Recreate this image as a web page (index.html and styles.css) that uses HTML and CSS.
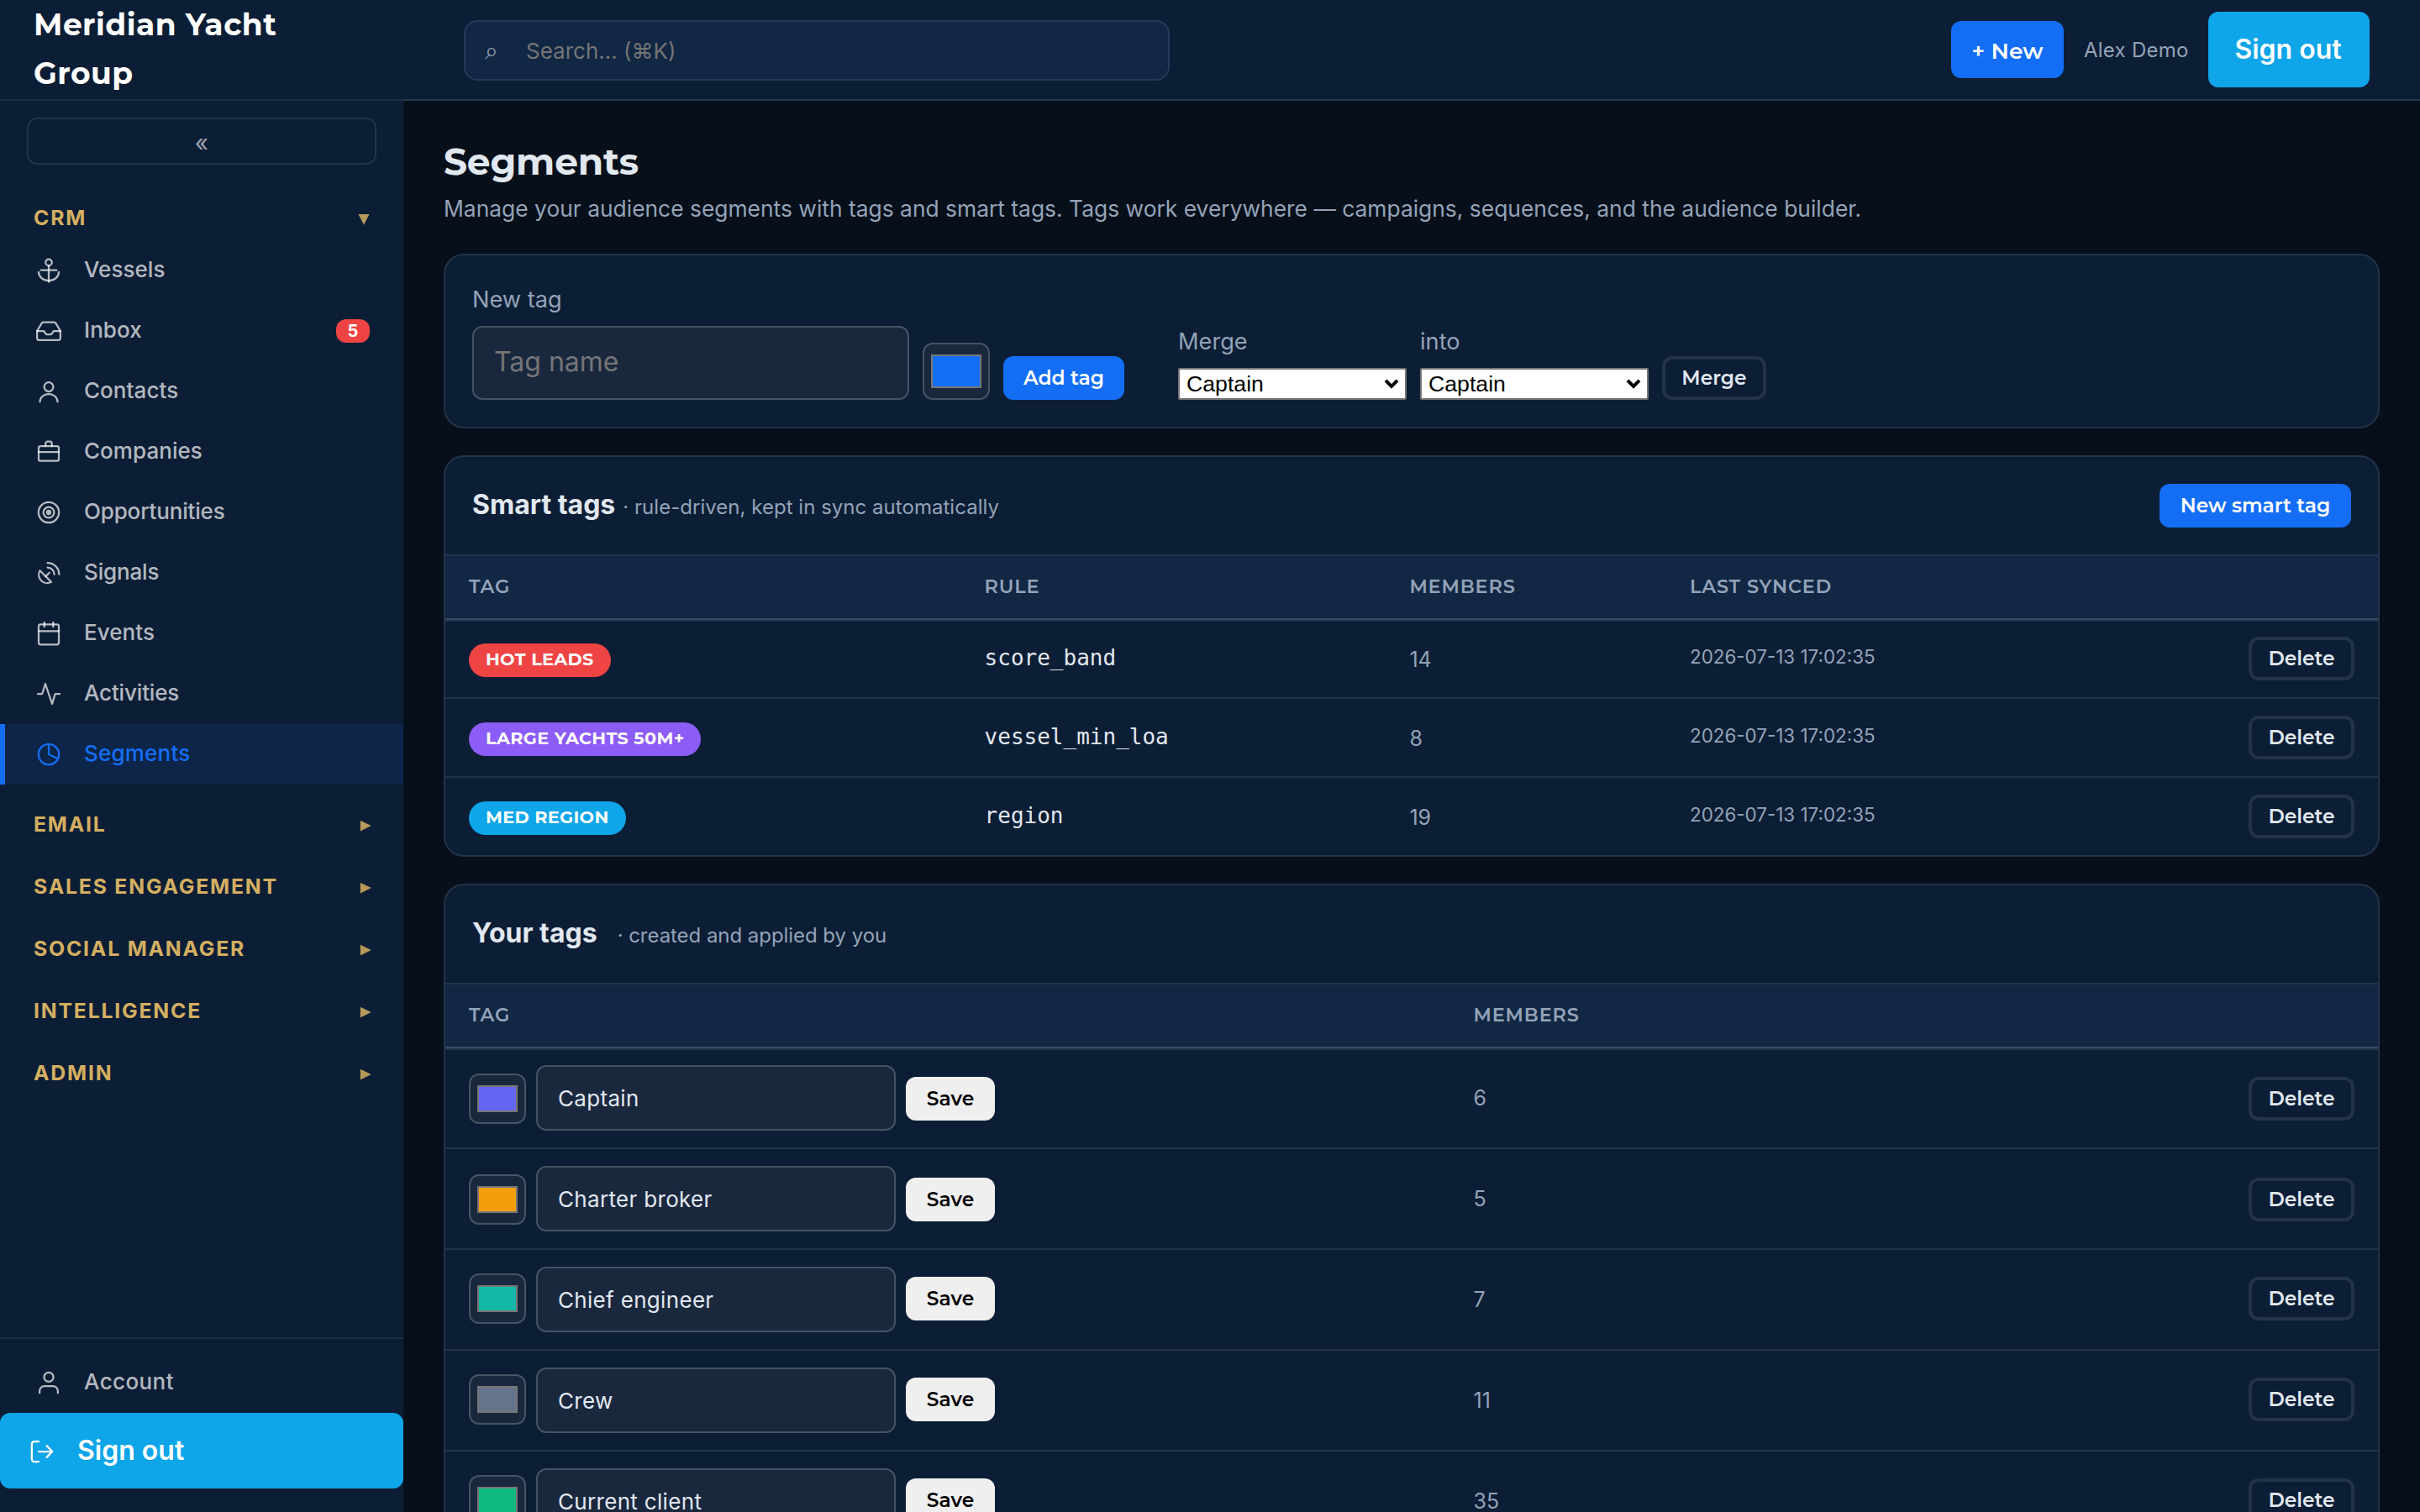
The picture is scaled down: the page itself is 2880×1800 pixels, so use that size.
FILE: index.html
```html
<!DOCTYPE html>
<html lang="en">
<head>
<meta charset="utf-8">
<title>Segments</title>
<link rel="stylesheet" href="styles.css">
</head>
<body>
<div class="app">
  <aside class="sidebar">
    <div class="brand">Meridian Yacht Group</div>
    <button class="collapse">«</button>
    <nav class="nav">
      <div class="section open">CRM <svg class="caret" viewBox="0 0 14 14"><path d="M.5 1h13L7 13.8z"/></svg></div>
      <a class="item"><svg class="icon" viewBox="0 0 24 24"><circle cx="12" cy="5.6" r="2.5"/><path d="M12 8.1v13"/><path d="M5.8 11.8h12.4"/><path d="M4 13.3a8 6.8 0 0 0 16 0"/></svg>Vessels</a>
      <a class="item"><svg class="icon" viewBox="0 0 24 24"><path d="M2.75 12v5.7a1.5 1.5 0 0 0 1.5 1.5h15.5a1.5 1.5 0 0 0 1.5-1.5V12L17.4 5.6a1.2 1.2 0 0 0-1-.6H7.6a1.2 1.2 0 0 0-1 .6z"/><path d="M2.75 12H8l2 2.7h4L16 12h5.25"/></svg>Inbox<span class="count">5</span></a>
      <a class="item"><svg class="icon" viewBox="0 0 24 24"><circle cx="12" cy="8.4" r="3.6"/><path d="M5 20.2a7 6.2 0 0 1 14 0"/></svg>Contacts</a>
      <a class="item"><svg class="icon" viewBox="0 0 24 24"><rect x="4" y="7.4" width="16" height="11.7" rx="1.5"/><path d="M9.500 7.4V5.3a1.6 1.6 0 0 1 1.6-1.6h1.8a1.6 1.6 0 0 1 1.6 1.6v2.1"/><path d="M4 12h16"/></svg>Companies</a>
      <a class="item tight"><svg class="icon" viewBox="0 0 24 24"><circle cx="12" cy="12" r="8.1"/><circle cx="12" cy="12" r="4.25"/><circle class="dot" cx="12" cy="12" r="2.1"/></svg>Opportunities</a>
      <a class="item tight"><svg class="icon" viewBox="0 0 24 24"><path d="M5 10.2a6.6 6.6 0 0 0 9 9z"/><path d="M9.500 14.8l3-3"/><path d="M11 7.7a5.5 5.5 0 0 1 5.4 5.5"/><path d="M11 4a9.2 9.2 0 0 1 9.2 9.2"/></svg>Signals</a>
      <a class="item"><svg class="icon" viewBox="0 0 24 24"><rect x="4" y="4.9" width="16" height="16" rx="1.5"/><path d="M4 10.2h16"/><path d="M8.5 3.3v3.5"/><path d="M15.5 3.3v3.5"/></svg>Events</a>
      <a class="item tight"><svg class="icon" viewBox="0 0 24 24"><path d="M3.3 12h3.500L9.3 4l5.4 16 2.4-8h3.6"/></svg>Activities</a>
      <a class="item loose active"><svg class="icon" viewBox="0 0 24 24"><circle cx="12" cy="12" r="8.1"/><path d="M12 4v8l7.2 3.5"/></svg>Segments</a>
      <div class="section">EMAIL <svg class="caret" viewBox="0 0 14 14"><path d="M.8.8v12.6L13.8 7.1z"/></svg></div>
      <div class="section">SALES ENGAGEMENT <svg class="caret" viewBox="0 0 14 14"><path d="M.8.8v12.6L13.8 7.1z"/></svg></div>
      <div class="section">SOCIAL MANAGER <svg class="caret" viewBox="0 0 14 14"><path d="M.8.8v12.6L13.8 7.1z"/></svg></div>
      <div class="section">INTELLIGENCE <svg class="caret" viewBox="0 0 14 14"><path d="M.8.8v12.6L13.8 7.1z"/></svg></div>
      <div class="section">ADMIN <svg class="caret" viewBox="0 0 14 14"><path d="M.8.8v12.6L13.8 7.1z"/></svg></div>
    </nav>
    <div class="side-foot">
      <a class="item looser"><svg class="icon" viewBox="0 0 24 24"><circle cx="12" cy="7.6" r="3.7"/><path d="M4.75 20.2v-1.5a4 4 0 0 1 4-4h6.5a4 4 0 0 1 4 4v1.5"/></svg>Account</a>
      <button class="signout side"><svg class="icon" viewBox="0 0 24 24"><path d="M9.4 4H5.9a2 2 0 0 0-2 2v12a2 2 0 0 0 2 2h3.5"/><path d="M9.4 12h10.6"/><path d="M15.7 7.4l4.5 4.6-4.5 4.6"/></svg>Sign out</button>
    </div>
  </aside>

  <div class="page">
    <header class="topbar">
      <div class="search"><span class="glass">⌕</span><span class="ph">Search… (⌘K)</span></div>
      <div class="user">
        <button class="btn primary new">+ New</button>
        <span class="name">Alex Demo</span>
        <button class="signout">Sign out</button>
      </div>
    </header>

    <main class="main">
      <h1>Segments</h1>
      <p class="lead">Manage your audience segments with tags and smart tags. Tags work everywhere — campaigns, sequences, and the audience builder.</p>

      <section class="card tools">
        <label class="field"><span>New tag</span><input class="text big" placeholder="Tag name"></label>
        <input class="color lg" type="color" value="#146ef5">
        <button class="btn primary add">Add tag</button>
        <label class="field merge-from"><span>Merge</span><span class="pick"><select><option>Captain</option></select><svg class="chev" viewBox="0 0 18 12"><path d="M2 1.8l7 7 7-7"/></svg></span></label>
        <label class="field"><span>into</span><span class="pick"><select><option>Captain</option></select><svg class="chev" viewBox="0 0 18 12"><path d="M2 1.8l7 7 7-7"/></svg></span></label>
        <button class="btn outline merge">Merge</button>
      </section>

      <section class="card">
        <div class="card-head"><h2>Smart tags</h2><span class="sub">· rule-driven, kept in sync automatically</span><button class="btn primary smart-new">New smart tag</button></div>
        <div class="row head smart"><span>TAG</span><span>RULE</span><span>MEMBERS</span><span>LAST SYNCED</span></div>
        <div class="row smart first"><span class="badge red">HOT LEADS</span><code>score_band</code><span class="num">14</span><time>2026-07-13 17:02:35</time><button class="btn outline">Delete</button></div>
        <div class="row smart"><span class="badge violet">LARGE YACHTS 50M+</span><code>vessel_min_loa</code><span class="num">8</span><time>2026-07-13 17:02:35</time><button class="btn outline">Delete</button></div>
        <div class="row smart"><span class="badge sky">MED REGION</span><code>region</code><span class="num">19</span><time>2026-07-13 17:02:35</time><button class="btn outline">Delete</button></div>
      </section>

      <section class="card">
        <div class="card-head"><h2>Your tags</h2><span class="sub wide">· created and applied by you</span></div>
        <div class="row head own"><span>TAG</span><span>MEMBERS</span></div>
        <div class="row own first low"><div class="edit"><input class="color" type="color" value="#6366f1"><input class="text" value="Captain"><button class="btn save">Save</button></div><span class="num">6</span><button class="btn outline">Delete</button></div>
        <div class="row own low"><div class="edit"><input class="color" type="color" value="#f59e0b"><input class="text" value="Charter broker"><button class="btn save">Save</button></div><span class="num">5</span><button class="btn outline">Delete</button></div>
        <div class="row own high"><div class="edit"><input class="color" type="color" value="#14b8a6"><input class="text" value="Chief engineer"><button class="btn save">Save</button></div><span class="num">7</span><button class="btn outline">Delete</button></div>
        <div class="row own high"><div class="edit"><input class="color" type="color" value="#64748b"><input class="text" value="Crew"><button class="btn save">Save</button></div><span class="num">11</span><button class="btn outline">Delete</button></div>
        <div class="row own high"><div class="edit"><input class="color" type="color" value="#10b981"><input class="text" value="Current client"><button class="btn save">Save</button></div><span class="num">35</span><button class="btn outline">Delete</button></div>
      </section>
    </main>
  </div>
</div>
</body>
</html>
```
FILE: styles.css
```css
:root {
  --bg: #060f1a;
  --panel: #0c1e35;
  --panel-2: #122744;
  --line: #233349;
  --line-strong: #3a4a61;
  --field: #1a283e;
  --field-line: #465364;
  --text: #e2e8f0;
  --muted: #94a3b8;
  --blue: #146ef5;
  --sky: #0ea5e9;
  --gold: #d4af61;
}
* { box-sizing: border-box; }
body {
  margin: 0;
  background: var(--bg);
  color: var(--text);
  font-family: Inter, "Liberation Sans", sans-serif;
  font-size: 26px;
}
button { font-family: inherit; border: 0; margin: 0; padding: 0; }
h1, h2, p { margin: 0; }

.app {
  display: grid;
  grid-template-columns: 480px 1fr;
  grid-template-rows: 1800px;
  height: 1800px;
  overflow: hidden;
}

/* Sidebar */
.sidebar { display: flex; flex-direction: column; background: var(--panel); }
.brand {
  height: 120px;
  padding: 1px 40px 0;
  border-bottom: 2px solid #1c2d43;
  font: 700 36px/57.6px Montserrat, Inter, sans-serif;
  letter-spacing: .5px;
  color: #fff;
}
.collapse {
  height: 56px;
  margin: 20px 32px 16px;
  padding-top: 3px;
  border: 2px solid var(--line);
  border-radius: 12px;
  background: none;
  color: rgba(255, 255, 255, .6);
  font-size: 28px;
}
.nav { flex: 1; }
.section {
  display: flex;
  align-items: center;
  justify-content: space-between;
  height: 54px;
  margin-top: 20px;
  padding: 0 38px 0 40px;
  font-size: 24.8px;
  font-weight: 700;
  letter-spacing: 1.8px;
  color: var(--gold);
}
.section.open { padding-right: 40px; }
.caret { width: 14px; height: 14px; margin-top: 4px; fill: var(--gold); opacity: .85; }
.item {
  display: flex;
  align-items: center;
  gap: 24px;
  height: 72px;
  padding: 0 40px 3px 34px;
  border-left: 6px solid transparent;
  font-weight: 500;
  letter-spacing: .05px;
  color: rgba(255, 255, 255, .7);
}
.item.tight { letter-spacing: -.16px; }
.item.loose { letter-spacing: .2px; }
.item.looser { letter-spacing: .4px; }
.item.active { border-color: var(--blue); background: rgba(20, 110, 245, .1); color: var(--blue); }
.icon {
  width: 36px;
  height: 36px;
  flex: none;
  fill: none;
  stroke: currentColor;
  stroke-width: 1.5;
  stroke-linecap: round;
  stroke-linejoin: round;
}
.item .icon { margin-top: 3px; }
.icon .dot { fill: currentColor; stroke: none; }
.count {
  margin: 3px 0 0 auto;
  width: 40px;
  height: 28px;
  border-radius: 12px;
  background: #ef4444;
  color: #fff;
  font-size: 20px;
  font-weight: 700;
  line-height: 29px;
  text-align: center;
}
.side-foot { padding: 16px 0 28px; border-top: 2px solid #1b2c43; }
.signout {
  height: 90px;
  width: 192px;
  padding: 0 2px 1px 0;
  border-radius: 12px;
  background: var(--sky);
  color: #fff;
  font-size: 32px;
  font-weight: 600;
}
.signout.side { display: flex; align-items: center; gap: 24px; width: 100%; padding: 0 0 2px 32px; }
.signout.side .icon { margin-top: 4px; }

/* Top bar */
.topbar {
  display: flex;
  align-items: center;
  justify-content: space-between;
  height: 120px;
  padding: 0 60px 0 72px;
  border-bottom: 2px solid #25364d;
  background: var(--panel);
}
.search {
  display: flex;
  align-items: center;
  gap: 33px;
  width: 840px;
  height: 72px;
  margin-top: 2px;
  padding-left: 23px;
  border: 2px solid #25395a;
  border-radius: 16px;
  background: var(--panel-2);
}
.glass { width: 16px; color: var(--muted); font-size: 28px; line-height: 36px; }
.ph { color: #757575; }
.user { display: flex; align-items: center; gap: 24px; }
.name { width: 124px; white-space: nowrap; font-size: 24px; letter-spacing: .25px; color: var(--muted); }

/* Buttons */
.btn {
  height: 52px;
  width: 126px;
  padding-bottom: 1px;
  border-radius: 12px;
  font: 600 23.4px Montserrat, Inter, sans-serif;
}
.primary { background: var(--blue); color: #fff; }
.outline { border: 4px solid var(--line); background: none; color: var(--text); }
.save { width: 106px; background: #efefef; color: #000; }
.new { width: 134px; height: 68px; padding: 2px 0 0; font-size: 26.4px; letter-spacing: .1px; }
.add { width: 144px; }
.merge { width: 124px; }
.smart-new { width: 228px; margin-left: auto; align-self: flex-start; }

/* Page content */
.page { min-width: 0; }
.main { padding: 48px; }
h1 { font: 700 44px/49px Montserrat, Inter, sans-serif; letter-spacing: -.2px; }
.lead { margin: 10px 0 33px; font-size: 26.4px; line-height: 42px; color: var(--muted); white-space: nowrap; }
.card {
  margin-bottom: 32px;
  border: 2px solid var(--line);
  border-radius: 24px;
  background: var(--panel);
  overflow: hidden;
}

/* Tag tools */
.tools { display: flex; align-items: flex-end; gap: 16px; height: 208px; padding: 32px; }
.field { display: flex; flex-direction: column; gap: 9px; font-size: 27.2px; line-height: 44px; color: var(--muted); }
.merge-from { margin-left: 48px; }
.text {
  width: 428px;
  height: 78px;
  margin: 0;
  padding: 0 24px;
  border: 2px solid var(--field-line);
  border-radius: 12px;
  background: var(--field);
  color: var(--text);
  font: 400 26px Inter, sans-serif;
  letter-spacing: .32px;
}
.text.big { width: 520px; height: 88px; padding: 0 24px 3px; font-size: 32px; letter-spacing: 0; }
.text::placeholder { color: #757575; }
.color {
  zoom: 2;
  width: 34px;
  height: 30px;
  margin: 0;
  padding: 2px;
  border: 1px solid var(--field-line);
  border-radius: 6px;
  background: var(--field);
}
.color.lg { width: 40px; height: 34px; }
.pick { position: relative; height: 38px; }
.pick select {
  display: block;
  width: 272px;
  height: 38px;
  margin: 0;
  padding: 0 8px;
  appearance: none;
  border: 2px solid #767676;
  border-radius: 2px;
  background: #fff;
  color: #000;
  font: 400 26.67px/32px "Liberation Sans", Arial, sans-serif;
}
.chev {
  position: absolute;
  right: 9px;
  top: 13px;
  width: 18px;
  height: 12px;
  fill: none;
  stroke: #000;
  stroke-width: 4;
}

/* Tables */
.card-head { display: flex; align-items: baseline; height: 116px; padding: 32px; }
h2 { font-size: 32px; font-weight: 700; line-height: 50px; }
.sub { margin-left: 9px; font-size: 24px; letter-spacing: .03px; color: var(--muted); }
.sub.wide { margin-left: 24px; letter-spacing: -.05px; }
.row { display: grid; align-items: center; padding: 0 28px; border-top: 2px solid var(--line); }
.smart { grid-template-columns: 613.6px 505.8px 333.6px 1fr auto; height: 94px; }
.own { grid-template-columns: 1195.5px 1fr auto; height: 120px; }
.head {
  height: 76px;
  padding-bottom: 2px;
  background: var(--panel-2);
  color: var(--muted);
  font: 600 22.4px Montserrat, Inter, sans-serif;
  letter-spacing: .85px;
}
.row.first { border-top-color: var(--line-strong); box-shadow: inset 0 2px var(--line); }
.badge {
  justify-self: start;
  height: 40px;
  margin-top: 4px;
  padding: 0 20px;
  border-radius: 20px;
  color: #fff;
  font: 700 20.8px/38px Montserrat, Inter, sans-serif;
  letter-spacing: .32px;
}
.red { background: #ef4444; }
.violet { background: #8b5cf6; }
.sky { background: var(--sky); }
code { margin-bottom: 2px; font: 400 26px "DejaVu Sans Mono", monospace; }
.num { margin-top: 1px; color: var(--muted); font-size: 25px; }
.own .num { margin: 0 0 1px; }
time { margin-bottom: 5px; color: var(--muted); font-size: 22.4px; }
.edit { display: flex; align-items: center; gap: 12px; }
.low .btn { margin-top: 2px; }
.low .color { margin-top: 1px; }
.high .btn { margin-bottom: 2px; }
.high .color { margin-bottom: 1px; }
```
